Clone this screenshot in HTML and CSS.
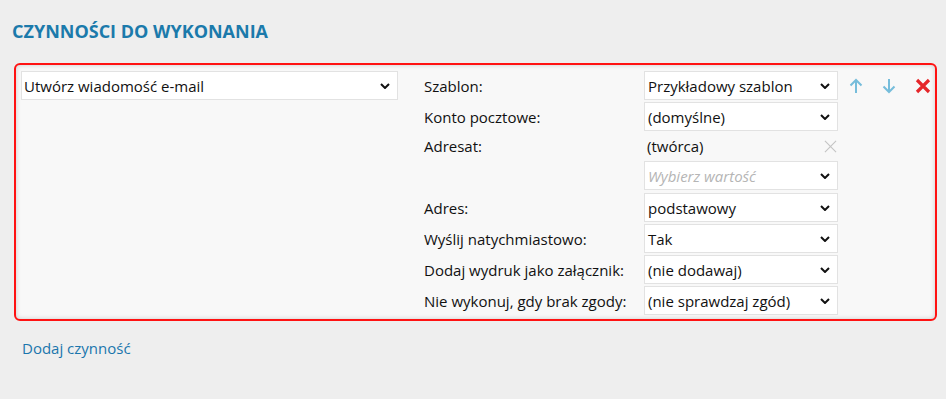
FILE: index.html
```html
<!DOCTYPE html>
<html lang="pl">
<head>
<meta charset="utf-8">
<title>Czynności do wykonania</title>
<link rel="stylesheet" href="styles.css">
</head>
<body>
<div class="page">
  <h2 class="title">CZYNNOŚCI DO WYKONANIA</h2>
  <div class="card">
    <div class="left">
      <div class="select wide"><span>Utwórz wiadomość e-mail</span><svg class="chev" viewBox="0 0 10 6"><path d="M1 1l4 4 4-4" /></svg></div>
    </div>
    <div class="form">
      <div class="label">Szablon:</div>
      <div class="select"><span>Przykładowy szablon</span><svg class="chev" viewBox="0 0 10 6"><path d="M1 1l4 4 4-4" /></svg></div>
      <div class="actions">
        <svg class="arrow" viewBox="0 0 14 16"><path d="M7 15V2M1.5 7.5L7 2l5.5 5.5" /></svg>
        <svg class="arrow" viewBox="0 0 14 16"><path d="M7 1v13M1.5 8.5L7 14l5.5-5.5" /></svg>
        <svg class="del" viewBox="0 0 16 16"><path d="M2 2l12 12M14 2L2 14" /></svg>
      </div>

      <div class="label">Konto pocztowe:</div>
      <div class="select"><span>(domyślne)</span><svg class="chev" viewBox="0 0 10 6"><path d="M1 1l4 4 4-4" /></svg></div>
      <div></div>

      <div class="label">Adresat:</div>
      <div class="value"><span>(twórca)</span><svg class="clear" viewBox="0 0 14 14"><path d="M1 1l12 12M13 1L1 13" /></svg></div>
      <div></div>

      <div></div>
      <div class="select gap3"><span class="placeholder">Wybierz wartość</span><svg class="chev" viewBox="0 0 10 6"><path d="M1 1l4 4 4-4" /></svg></div>
      <div></div>

      <div class="label">Adres:</div>
      <div class="select"><span>podstawowy</span><svg class="chev" viewBox="0 0 10 6"><path d="M1 1l4 4 4-4" /></svg></div>
      <div></div>

      <div class="label">Wyślij natychmiastowo:</div>
      <div class="select"><span>Tak</span><svg class="chev" viewBox="0 0 10 6"><path d="M1 1l4 4 4-4" /></svg></div>
      <div></div>

      <div class="label">Dodaj wydruk jako załącznik:</div>
      <div class="select"><span>(nie dodawaj)</span><svg class="chev" viewBox="0 0 10 6"><path d="M1 1l4 4 4-4" /></svg></div>
      <div></div>

      <div class="label">Nie wykonuj, gdy brak zgody:</div>
      <div class="select"><span>(nie sprawdzaj zgód)</span><svg class="chev" viewBox="0 0 10 6"><path d="M1 1l4 4 4-4" /></svg></div>
      <div></div>
    </div>
  </div>
  <a class="add" href="#">Dodaj czynność</a>
</div>
</body>
</html>
```

FILE: styles.css
```css
html, body {
  margin: 0;
  padding: 0;
  background: #eeeeee;
}
body {
  font-family: "Open Sans", "Noto Sans", sans-serif;
  font-size: 15px;
  color: #111;
}
.page {
  padding: 19px 9px 0 14px;
}
.title {
  margin: 0 0 20px -2px;
  font-size: 18px;
  font-weight: 700;
  color: #1b7aab;
  line-height: 24px;
}
.card {
  box-sizing: border-box;
  width: 923px;
  border: 2px solid #ff1212;
  border-radius: 6px;
  background: #f8f8f8;
  box-shadow: inset 0 0 5px rgba(0, 0, 0, 0.18);
  padding: 6px 0 4px 5px;
  display: flex;
  align-items: flex-start;
}
.left {
  width: 377px;
  margin-right: 25px;
}
.select {
  box-sizing: border-box;
  height: 29px;
  background: #fff;
  border: 1px solid #e2e2e2;
  display: flex;
  align-items: center;
  justify-content: space-between;
  padding: 0 7px 0 3px;
  white-space: nowrap;
}
.select.wide {
  width: 377px;
  padding-left: 2px;
}
.select.gap3 {
  margin-bottom: 1px;
}
.chev {
  width: 10px;
  height: 6px;
  fill: none;
  stroke: #111;
  stroke-width: 2;
}
.placeholder {
  color: #b5b5b5;
  font-style: italic;
}
.form {
  display: grid;
  grid-template-columns: 221px 194px auto;
  row-gap: 2px;
  align-items: center;
}
.label {
  white-space: nowrap;
  padding-left: 1px;
}
.value {
  height: 26px;
  display: flex;
  align-items: center;
  justify-content: space-between;
  padding: 0 1px 0 3px;
}
.clear {
  width: 13px;
  height: 13px;
  fill: none;
  stroke: #c4c4c4;
  stroke-width: 1.2;
}
.actions {
  display: flex;
  align-items: center;
  gap: 19px;
  padding-left: 11px;
}
.arrow {
  width: 14px;
  height: 16px;
  fill: none;
  stroke: #76bddb;
  stroke-width: 2;
}
.del {
  width: 16px;
  height: 16px;
  fill: none;
  stroke: #e5262a;
  stroke-width: 3.2;
}
.add {
  display: inline-block;
  margin: 17px 0 0 8px;
  color: #1a76ad;
  text-decoration: none;
}
```
